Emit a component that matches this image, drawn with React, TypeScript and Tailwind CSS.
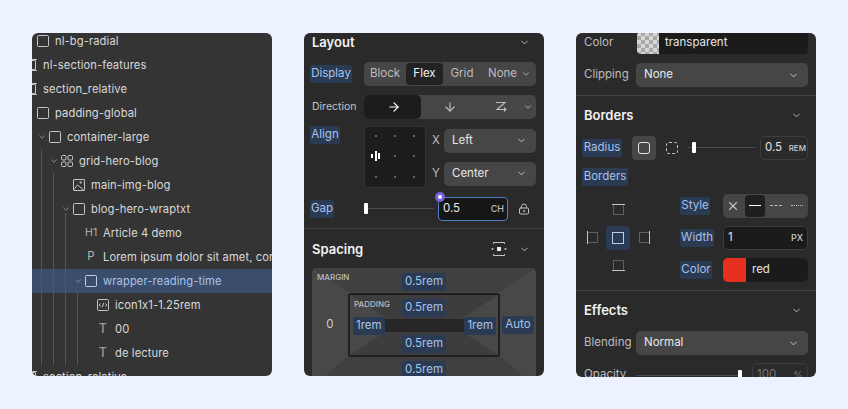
import { ReactNode } from "react";
import { ChevronDown, ArrowRight, ArrowDown, LockKeyhole, X } from "lucide-react";

interface TreeRow {
    label: string;
    depth: number;
    icon: "box" | "section" | "grid" | "image" | "h1" | "p" | "embed" | "t";
    open?: boolean;
    selected?: boolean;
}

const treeRows: TreeRow[] = [
    { label: "nl-bg-radial", depth: 1, icon: "box" },
    { label: "nl-section-features", depth: 0, icon: "section" },
    { label: "section_relative", depth: 0, icon: "section" },
    { label: "padding-global", depth: 1, icon: "box" },
    { label: "container-large", depth: 2, icon: "box", open: true },
    { label: "grid-hero-blog", depth: 3, icon: "grid", open: true },
    { label: "main-img-blog", depth: 4, icon: "image" },
    { label: "blog-hero-wraptxt", depth: 4, icon: "box", open: true },
    { label: "Article 4 demo", depth: 5, icon: "h1" },
    { label: "Lorem ipsum dolor sit amet, consectetur", depth: 5, icon: "p" },
    { label: "wrapper-reading-time", depth: 5, icon: "box", open: true, selected: true },
    { label: "icon1x1-1.25rem", depth: 6, icon: "embed" },
    { label: "00", depth: 6, icon: "t" },
    { label: "de lecture", depth: 6, icon: "t" },
    { label: "section_relative", depth: 0, icon: "section" },
];

// depth 0 rows start past the left edge of the panel
const indents = ["-ml-[19px]", "-ml-[7px]", "pl-[5px]", "pl-[17px]", "pl-[29px]", "pl-[41px]", "pl-[53px]"];

const TreeIcon = ({ icon, selected }: { icon: TreeRow["icon"]; selected?: boolean }) => {
    const color = selected ? "#b9cdec" : "#c4c4c4";
    if (icon === "h1") {
        return <span className="w-3 text-[10.5px] text-left text-[#b5b5b5] whitespace-nowrap">H1</span>;
    }
    if (icon === "p") {
        return <span className="w-3 text-[11.5px] text-center text-[#b5b5b5]">P</span>;
    }
    if (icon === "t") {
        return <span className="w-3 text-[12.5px] font-medium text-center text-[#9a9a9a]">T</span>;
    }
    return (
        <svg width="12" height="12" viewBox="0 0 12 12" fill="none" stroke={color} strokeWidth="1">
            {icon === "box" && <rect x="0.5" y="0.5" width="11" height="11" rx="1" />}
            {icon === "section" && (
                <>
                    <rect x="1.5" y="1.5" width="9" height="9" rx="0.5" />
                    <path d="M0 0.5h12M0 11.5h12" />
                </>
            )}
            {icon === "grid" && (
                <>
                    <rect x="0.5" y="0.5" width="4.5" height="4.5" rx="1" />
                    <rect x="7" y="0.5" width="4.5" height="4.5" rx="1" />
                    <rect x="0.5" y="7" width="4.5" height="4.5" rx="1" />
                    <rect x="7" y="7" width="4.5" height="4.5" rx="1" />
                </>
            )}
            {icon === "image" && (
                <>
                    <rect x="0.5" y="0.5" width="11" height="11" rx="0.5" />
                    <path d="M1 10.5 4.5 6l6 5" />
                    <circle cx="7.8" cy="3.5" r="0.8" />
                </>
            )}
            {icon === "embed" && (
                <>
                    <rect x="0.5" y="0.5" width="11" height="11" rx="1" />
                    <path d="M3.5 4.5 2.2 6l1.3 1.5M8.5 4.5 9.8 6 8.5 7.5M6.8 3.8 5.2 8.2" />
                </>
            )}
        </svg>
    );
};

const Tree = () => (
    <div className="relative w-[240px] h-[343px] shrink-0 overflow-hidden rounded-md bg-[#343434]">
        <div className="-mt-1">
            {treeRows.map((row, index) => (
                <div
                    key={index}
                    className={`relative flex h-6 items-center whitespace-nowrap text-[11.2px] tracking-[0.1px] ${
                        row.selected ? "bg-[#3a4d6b] text-[#a9c3ea]" : "text-[#d9d9d9]"
                    }`}
                >
                    <div className={`flex items-center ${indents[row.depth]}`}>
                        <span className="flex w-3 justify-start">
                            {row.open && <ChevronDown size={10} className="text-[#9a9a9a]" />}
                        </span>
                        <TreeIcon icon={row.icon} selected={row.selected} />
                        <span className="ml-1.5">{row.label}</span>
                    </div>
                </div>
            ))}
        </div>
        <span className="absolute left-[9px] top-[116px] h-[216px] w-px bg-[#555]" />
        <span className="absolute left-[21px] top-[140px] h-[192px] w-px bg-[#555]" />
        <span className="absolute left-[33px] top-[180px] h-[152px] w-px bg-[#555]" />
        <span className="absolute left-[45px] top-[260px] h-[72px] w-px bg-[#555]" />
    </div>
);

const Tag = ({ children, className = "" }: { children: ReactNode; className?: string }) => (
    <span className={`inline-flex h-[18px] items-center rounded-[2px] bg-[#2b3b54] px-[3px] text-[11.5px] text-[#a9c3ea] ${className}`}>
        {children}
    </span>
);

const Heading = ({ title, extra }: { title: string; extra?: ReactNode }) => (
    <div className="flex items-center justify-between pl-2 pr-[14px]">
        <span className="text-[13px] font-semibold text-[#f2f2f2]">{title}</span>
        <span className="flex items-center gap-[12px]">
            {extra}
            <ChevronDown size={11} className="text-[#c4c4c4]" />
        </span>
    </div>
);

const Select = ({ value, className = "" }: { value: string; className?: string }) => (
    <div className={`flex h-6 items-center justify-between rounded-[5px] bg-[#464646] pl-2 pr-[9px] text-[11.5px] text-[#e6e6e6] ${className}`}>
        {value}
        <ChevronDown size={11} className="text-[#cfcfcf]" />
    </div>
);

const Layout = () => (
    <div className="h-[343px] w-[240px] shrink-0 overflow-hidden rounded-md bg-[#2a2a2a]">
        <Heading title="Layout" />
        <div className="mt-[9px] flex h-6 items-center pl-1.5 pr-2">
            <Tag className="w-[42px] justify-center">Display</Tag>
            <div className="ml-[12px] flex h-6 flex-1 items-center rounded-[5px] bg-[#464646] text-[11.5px] text-[#bdbdbd]">
                <span className="w-[42px] text-center">Block</span>
                <span className="flex h-[22px] w-[37px] items-center justify-center rounded-[4px] bg-[#222] text-[#f2f2f2]">Flex</span>
                <span className="w-[38px] text-center">Grid</span>
                <span className="ml-[7px]">None</span>
                <ChevronDown size={10} className="ml-[4px]" />
            </div>
        </div>
        <div className="mt-[9px] flex h-6 items-center pl-2 pr-2">
            <span className="w-[52px] text-[10.5px] text-[#c4c4c4]">Direction</span>
            <div className="flex h-6 flex-1 items-center rounded-[5px] bg-[#464646] text-[#bdbdbd]">
                <span className="flex h-6 w-[57px] items-center justify-center rounded-[5px] bg-[#1c1c1c] pl-[3px] text-white">
                    <ArrowRight size={14} />
                </span>
                <span className="flex w-[58px] justify-center"><ArrowDown size={14} /></span>
                <span className="flex w-[44px] justify-center">
                    <svg width="14" height="14" viewBox="0 0 14 14" fill="none" stroke="currentColor" strokeWidth="1.1">
                        <path d="M2 2.5h9L3 9.5h9M10 7.5l2 2-2 2" />
                    </svg>
                </span>
                <ChevronDown size={10} />
            </div>
        </div>
        <div className="mt-[7px] flex pl-1.5 pr-2">
            <Tag className="w-[30px] justify-center">Align</Tag>
            <div className="ml-[24px] grid h-[62px] w-[62px] grid-cols-3 place-items-center rounded-[5px] border border-[#333] bg-[#1d1d1d] p-px">
                {[0, 1, 2, 3, 4, 5, 6, 7, 8].map((cell) =>
                    cell === 3 ? (
                        <span key={cell} className="flex items-center gap-[1.5px]">
                            <span className="h-1 w-[2px] bg-white" />
                            <span className="h-2.5 w-[2px] bg-white" />
                            <span className="h-1.5 w-[2px] bg-white" />
                        </span>
                    ) : (
                        <span key={cell} className="h-[2px] w-[2px] rounded-full bg-[#7a7a7a]" />
                    )
                )}
            </div>
            <div className="ml-[6px] flex flex-1 flex-col gap-[9px] pt-[3px]">
                <div className="flex items-center">
                    <span className="w-[12px] text-[11.5px] text-[#bdbdbd]">X</span>
                    <Select value="Left" className="flex-1" />
                </div>
                <div className="flex items-center">
                    <span className="w-[12px] text-[11.5px] text-[#bdbdbd]">Y</span>
                    <Select value="Center" className="flex-1" />
                </div>
            </div>
        </div>
        <div className="mt-[9px] flex h-6 items-center pl-1.5 pr-2">
            <Tag className="w-[24px] justify-center">Gap</Tag>
            <div className="relative ml-[30px] h-px w-[70px] bg-[#4a4a4a]">
                <span className="absolute -top-[5px] left-0 h-[11px] w-[4px] rounded-[1px] bg-white" />
            </div>
            <div className="relative ml-1 flex h-6 w-[70px] items-center justify-between rounded-[4px] border border-[#4c7fc4] bg-[#161616] pl-1 pr-[3px]">
                <span className="absolute -left-[4px] -top-[6px] flex h-[10px] w-[10px] items-center justify-center rounded-full bg-[#7b61d8]">
                    <span className="h-1 w-1 rounded-full bg-white" />
                </span>
                <span className="text-[11.5px] text-[#e6e6e6]">0.5</span>
                <span className="text-[9px] font-medium text-[#bdbdbd]">CH</span>
            </div>
            <LockKeyhole size={12} className="ml-[10px] text-[#bdbdbd]" />
        </div>
        <div className="mt-[7px] h-px bg-[#3f3f3f]" />
        <div className="mt-[11px]">
            <Heading
                title="Spacing"
                extra={
                    <svg width="16" height="14" viewBox="0 0 16 14" fill="none" stroke="#c4c4c4" strokeWidth="1">
                        <path d="M2.5 2V0.5h11V2M2.5 12v1.5h11V12" />
                        <path d="M0.5 7h2M13.5 7h2" strokeWidth="1.4" />
                        <rect x="6" y="5" width="4" height="4" fill="#ececec" stroke="none" />
                    </svg>
                }
            />
        </div>
        <div className="relative mx-2 mt-[9px] h-[120px] rounded-[5px] bg-[#484848] text-[11.5px]">
            <svg className="absolute inset-0" width="224" height="120" viewBox="0 0 224 120">
                <path d="M0 0 36 24H188L224 0Z" fill="#404040" />
                <path d="M0 120 36 88H188L224 120Z" fill="#404040" />
            </svg>
            <span className="absolute left-[5px] top-[3px] text-[8px] font-medium text-[#bdbdbd]">MARGIN</span>
            <div className="relative flex h-[25px] items-center justify-center pt-[3px]">
                <Tag>0.5rem</Tag>
            </div>
            <div className="relative flex items-center">
                <span className="w-[36px] text-center text-[#cfcfcf]">0</span>
                <div className="relative h-[64px] w-[152px] rounded-[3px] border-2 border-[#1f1f1f] bg-[#3d3d3d]">
                    <svg className="absolute inset-0" width="148" height="60" viewBox="0 0 148 60">
                        <path d="M0 0 34 22V38L0 60Z" fill="#484848" />
                        <path d="M148 0 114 22V38L148 60Z" fill="#484848" />
                    </svg>
                    <span className="absolute left-[4px] top-[3px] text-[8px] font-medium text-[#bdbdbd]">PADDING</span>
                    <div className="relative flex h-[23px] items-center justify-center pt-[3px]">
                        <Tag>0.5rem</Tag>
                    </div>
                    <div className="relative flex h-[15px] items-center justify-center">
                        <Tag className="absolute left-[3px]">1rem</Tag>
                        <span className="h-[13px] w-[80px] rounded-[2px] bg-[#262626]" />
                        <Tag className="absolute right-[2px]">1rem</Tag>
                    </div>
                    <div className="relative flex h-[22px] items-center justify-center">
                        <Tag>0.5rem</Tag>
                    </div>
                </div>
                <span className="flex-1 text-center">
                    <Tag>Auto</Tag>
                </span>
            </div>
            <div className="relative flex h-6 items-center justify-center pt-[2px]">
                <Tag>0.5rem</Tag>
            </div>
        </div>
    </div>
);

const Side = ({ d }: { d: string }) => (
    <svg width="13" height="13" viewBox="0 0 13 13" fill="none">
        <rect x="1.5" y="1.5" width="10" height="10" stroke="#5e5e5e" />
        <path d={d} stroke="#c4c4c4" />
    </svg>
);

const Borders = () => (
    <div className="h-[344px] w-[240px] shrink-0 overflow-hidden rounded-md bg-[#2a2a2a] text-[11.5px]">
        <div className="-mt-px flex h-[22px] items-center pl-2 pr-2">
            <span className="w-[53px] text-[#bdbdbd]">Color</span>
            <div className="flex h-[22px] flex-1 overflow-hidden rounded-[4px] bg-[#1b1b1b]">
                <span className="w-[22px] bg-[conic-gradient(#a8a8a8_25%,#d6d6d6_0_50%,#a8a8a8_0_75%,#d6d6d6_0)] bg-[length:8px_8px]" />
                <span className="flex items-center pl-1.5 text-[#e6e6e6]">transparent</span>
            </div>
        </div>
        <div className="mt-[9px] flex h-6 items-center pl-2 pr-2">
            <span className="w-[52px] text-[#bdbdbd]">Clipping</span>
            <Select value="None" className="flex-1" />
        </div>
        <div className="mt-2 h-px bg-[#444]" />
        <div className="mt-[10px]">
            <Heading title="Borders" />
        </div>
        <div className="mt-[10px] flex h-6 items-center pl-1.5 pr-2">
            <Tag className="w-[40px] justify-center">Radius</Tag>
            <span className="ml-[10px] flex h-6 w-6 items-center justify-center rounded-[4px] bg-[#464646]">
                <span className="h-3 w-3 rounded-[3px] border border-[#e6e6e6]" />
            </span>
            <span className="ml-[10px] h-3 w-3 rounded-[3px] border border-dashed border-[#c4c4c4]" />
            <div className="relative ml-[10px] h-px w-[68px] bg-[#4a4a4a]">
                <span className="absolute -top-[5px] left-[4px] h-[11px] w-[4px] rounded-[1px] bg-white" />
            </div>
            <div className="ml-1 flex h-6 w-[48px] items-center justify-between rounded-[4px] border border-[#3d3d3d] pl-[4px] pr-[1px]">
                <span className="text-[#e6e6e6]">0.5</span>
                <span className="text-[8px] font-medium text-[#cfcfcf]">REM</span>
            </div>
        </div>
        <div className="mt-[8px] pl-1.5">
            <Tag className="w-[46px] justify-center">Borders</Tag>
        </div>
        <div className="mt-[8px] flex pl-1 pr-2">
            <div className="mt-1 grid h-[80px] w-[76px] grid-cols-[24px_24px_24px] gap-x-[2px] gap-y-1 place-items-center">
                <span />
                <span className="flex h-6 w-6 items-center justify-center"><Side d="M0 1.5h13" /></span>
                <span />
                <span className="flex h-6 w-6 items-center justify-center"><Side d="M1.5 0v13" /></span>
                <span className="flex h-6 w-6 items-center justify-center rounded-[3px] bg-[#2b3b54]">
                    <span className="h-3 w-3 border border-[#b9cdec]" />
                </span>
                <span className="flex h-6 w-6 items-center justify-center"><Side d="M11.5 0v13" /></span>
                <span />
                <span className="flex h-6 w-6 items-center justify-center"><Side d="M0 11.5h13" /></span>
                <span />
            </div>
            <div className="ml-[24px] flex flex-1 flex-col gap-2">
                <div className="flex h-6 items-center">
                    <Tag className="w-[30px] justify-center">Style</Tag>
                    <div className="ml-[13px] flex h-6 flex-1 items-center rounded-[5px] bg-[#464646] text-[#bdbdbd]">
                        <X size={14} className="ml-[3px]" />
                        <span className="ml-[5px] flex h-[22px] w-[20px] items-center justify-center rounded-[4px] bg-[#1f1f1f]">
                            <span className="h-px w-3 bg-white" />
                        </span>
                        <span className="ml-[5px] w-[12px] border-t border-dashed border-[#bdbdbd]" />
                        <span className="ml-[9px] w-[12px] border-t border-dotted border-[#bdbdbd]" />
                    </div>
                </div>
                <div className="flex h-6 items-center">
                    <Tag className="w-[34px] justify-center">Width</Tag>
                    <div className="ml-[9px] flex h-6 flex-1 items-center justify-between rounded-[5px] border border-[#3d3d3d] bg-[#1b1b1b] pl-1 pr-[4px]">
                        <span className="text-[#e6e6e6]">1</span>
                        <span className="text-[9px] font-medium text-[#cfcfcf]">PX</span>
                    </div>
                </div>
                <div className="flex h-6 items-center">
                    <Tag className="w-[32px] justify-center">Color</Tag>
                    <div className="ml-[11px] flex h-6 flex-1 overflow-hidden rounded-[5px] bg-[#1b1b1b]">
                        <span className="w-[23px] bg-[#e8301f]" />
                        <span className="flex items-center pl-1.5 text-[#e6e6e6]">red</span>
                    </div>
                </div>
            </div>
        </div>
        <div className="mt-2 h-px bg-[#444]" />
        <div className="mt-[10px]">
            <Heading title="Effects" />
        </div>
        <div className="mt-[11px] flex h-6 items-center pl-2 pr-2">
            <span className="w-[52px] text-[#bdbdbd]">Blending</span>
            <Select value="Normal" className="flex-1" />
        </div>
        <div className="mt-2 flex h-6 items-center pl-2 pr-2">
            <span className="w-[52px] text-[#bdbdbd]">Opacity</span>
            <div className="relative h-px w-[106px] bg-[#4a4a4a]">
                <span className="absolute -top-[5px] right-0 h-[11px] w-[4px] rounded-[1px] bg-white" />
            </div>
            <div className="ml-[10px] flex h-6 flex-1 items-center justify-between rounded-[4px] border border-[#3d3d3d] pl-1 pr-1 text-[#777]">
                <span>100</span>
                <span className="text-[10px]">%</span>
            </div>
        </div>
    </div>
);

export default function App() {
    return (
        <div className="flex h-[409px] w-[848px] items-start gap-8 bg-[#edf2ff] pl-8 pt-[33px] font-['Inter',sans-serif]">
            <Tree />
            <Layout />
            <Borders />
        </div>
    );
}
